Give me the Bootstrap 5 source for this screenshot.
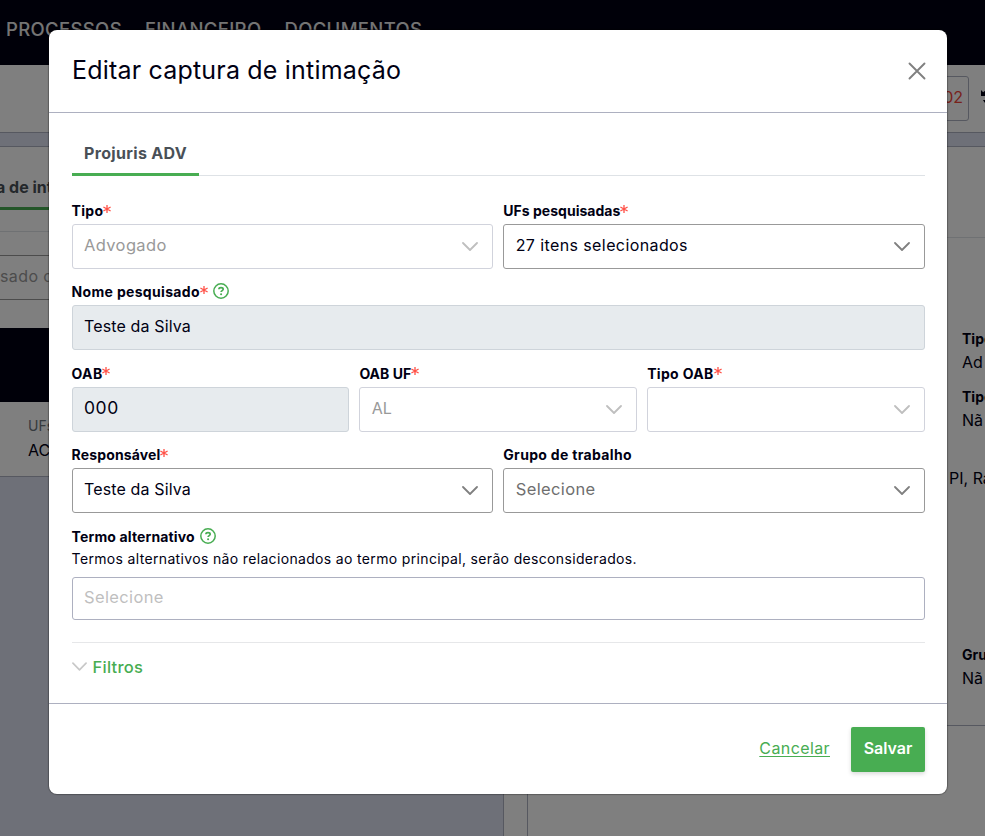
<!DOCTYPE html>
<html lang="pt-BR">
<head>
<meta charset="utf-8">
<meta name="viewport" content="width=device-width, initial-scale=1">
<title>Editar captura de intimação</title>
<link href="https://cdn.jsdelivr.net/npm/bootstrap@5.3.0/dist/css/bootstrap.min.css" rel="stylesheet">
<style>
:root{--ink:#000013;--brand:#48ad52;--line:#adb0c0}
body{font-family:Inter,"Open Sans",sans-serif;font-size:16px;line-height:24px;color:var(--ink);height:836px;overflow:hidden;background:#dce0f0}
.app{height:836px;overflow:hidden}
/* tracking steps */
.k0{letter-spacing:.02px}.k1{letter-spacing:.14px}.k3{letter-spacing:.32px}.k4{letter-spacing:.4px}.k5{letter-spacing:.55px}.k7{letter-spacing:.67px}
.topnav{height:65px;background:var(--ink);color:#e8e8e8;font-size:18.5px;font-weight:500;padding:0 0 7px 6px;gap:23px}
.topnav .k5{letter-spacing:.35px}
.toolbar{height:68px;border-bottom:1px solid var(--line);padding:11px 0 0}
.code-wrap{width:969px}
.code-box{width:200px;height:45px;border:1px solid var(--line);border-radius:3px;color:#f04438;padding:0 5px 3px 0}
.toolbar svg{margin:14px 0 0 12px}
.panes{margin-top:13px;height:690px}
.pane-left{width:503px}
.pane-left>.sheet{height:331px;border-bottom:1px solid var(--line);border-top:1px solid var(--line)}
.bg-tab{height:63px;border-bottom:3px solid var(--brand);padding-top:28px;color:#495057;margin-left:-4px}
.bg-input{height:45px;margin-top:23px;border:solid #999;border-width:1px 0;color:#999;line-height:41px}
.bg-rule{height:22px;border-bottom:1px solid #dee2e6}
.bg-head{height:74px;margin-top:28px;background:var(--ink)}
.bg-row{padding:12px 0 0 28px}
.bg-row .cap{font-size:14px;color:#6c757d}
.gutter{width:24px;border-left:1px solid var(--line)}
.pane-right{min-width:0;border-left:1px solid var(--line);border-top:1px solid var(--line)}
.pr-head{height:91px;border-bottom:1px solid #dee2e6}
.pr-body{height:488px;border-bottom:1px solid var(--line);padding:89px 0 0 434px;line-height:23px}
.pr-body .item{margin-bottom:11px;line-height:24px}
.pr-body .item b{line-height:23px}
.pr-body .states{margin:35px 0 153px -13px}
.pr-body b,.lbl{font-size:14px;font-weight:700}
.shade{inset:0;background:rgba(0,0,0,.5);padding:30px 0 0 49px}
.dialog{width:898px;height:764px;border-radius:8px;box-shadow:0 0 1px 1px rgba(0,0,0,.28)}
.dlg-head{height:83px;border-bottom:1px solid var(--line);padding:0 21px 1px 23px}
.dlg-title{font-size:25px;font-weight:400;line-height:30px;padding-bottom:2px;letter-spacing:.19px}
.dlg-body{height:590px;padding:16px 22px 0 22.6px}
.dlg-foot{height:91px;border-top:1px solid var(--line);padding:0 22px 0 0;gap:21px}
.tabs{height:47px;border-bottom:1px solid #dee2e6;margin-bottom:26px}
.tab-on{height:47px;width:127px;border-bottom:3px solid var(--brand);border-radius:2px 2px 0 0;padding:12px 0 0 12.5px;font-weight:700;color:#495057}
.fields{--bs-gutter-x:10px}
.fields+.fields{margin-top:14.4px}
.lbl{height:22px;line-height:17px;padding-bottom:5px;gap:5px}
.lbl .green{margin-top:-1px}
.req{color:#ff5147;margin:-4px 0 0 -5px}
.box{height:45px;border:1px solid #999;border-radius:3px;padding:0 14px 2px 11.4px}
.box span{padding-bottom:1px}
.box svg{color:#808080;margin-top:2px}
.box.off{border-color:#d1d3dc;color:#999}
.box.off svg{color:#bfbfbf}
.box.ro{background:#e7ebee;border-color:#ced4da}
.box .idle{color:#6f6f6f}
.box .k7{font-size:16.5px;letter-spacing:.37px}
.digits{font-size:17.5px;letter-spacing:.6px}
.hint{font-size:14px;line-height:22px;margin-top:-2px}
.hint.k3{letter-spacing:.34px}
.box.tags{height:43px;margin-top:7px;border-color:var(--line);color:#bfbfbf}
.split{height:23px;border-bottom:1px solid #e6e7e9}
.filters{margin-top:12px;gap:6px;color:var(--brand)}
.filters svg{color:#c8c8c8}
.filters .k7{font-size:16.5px;font-weight:500;letter-spacing:.25px}
.btn-save{width:74px;height:45px;background:var(--brand);color:#fff;border-radius:2px;font-weight:600;box-shadow:0 2px 4px rgba(0,0,0,.15);padding:0 0 3px}
.cancel{color:var(--brand);text-underline-offset:2px;padding-bottom:2px}
.green{color:var(--brand)}
</style>
<script src="https://cdn.jsdelivr.net/npm/bootstrap@5.3.0/dist/js/bootstrap.bundle.min.js"></script>
</head>
<body>
<svg class="d-none">
 <symbol id="chev" viewBox="0 0 16 9"><path d="M1 1l7 7 7-7" fill="none" stroke="currentColor" stroke-width="1.8" stroke-linecap="round" stroke-linejoin="round"/></symbol>
 <symbol id="ask" viewBox="0 0 16 16"><circle cx="8" cy="8" r="7.2" fill="none" stroke="currentColor" stroke-width="1.5"/><path d="M5.900 6.200C6 5 6.900 4.600 8 4.600c1.300 0 2.200.6 2.200 1.600 0 1.400-2.100 1.400-2.100 2.900" fill="none" stroke="currentColor" stroke-width="1.700"/><circle cx="8.100" cy="11.200" r="1.050" fill="currentColor"/></symbol>
 <symbol id="star" viewBox="0 0 8 8"><path d="M4 0v8M.4 2l7.200 4M7.600 2L.4 6" stroke="currentColor" stroke-width="1.300"/></symbol>
</svg>
<div class="app">
 <nav class="topnav d-flex align-items-center"><span class="k5">PROCESSOS</span><span class="k5">FINANCEIRO</span><span class="k5">DOCUMENTOS</span></nav>
 <div class="toolbar bg-white d-flex"><div class="code-wrap d-flex justify-content-end flex-shrink-0"><div class="code-box d-flex align-items-center justify-content-end">02</div></div>
  <svg class="flex-shrink-0" width="18" height="18" viewBox="0 0 18 18"><path d="M0 0l2.200 2.200L4 .8V6H0zM2 10h4v2.500H3.500z" fill="#000013"/></svg></div>
 <div class="panes d-flex">
  <div class="pane-left flex-shrink-0"><div class="sheet bg-white">
   <div class="bg-tab fw-bold">a de int</div>
   <div class="bg-rule"></div>
   <div class="bg-input k4">sado c</div>
   <div class="bg-head"></div>
   <div class="bg-row"><div class="cap">UFs</div><div>AC</div></div>
  </div></div>
  <div class="gutter bg-white flex-shrink-0"></div>
  <div class="pane-right flex-grow-1 bg-white">
   <div class="pr-head"></div>
   <div class="pr-body text-nowrap">
    <div class="item"><b class="d-block">Tipo</b>Ad</div>
    <div class="item"><b class="d-block">Tipo</b>Nã</div>
    <div class="states">PI, Ra</div>
    <div class="item"><b class="d-block">Gru</b>Nã</div>
   </div>
  </div>
 </div>
</div>
<div class="shade position-absolute">
 <div class="dialog bg-white">
  <div class="dlg-head d-flex align-items-center justify-content-between"><h1 class="dlg-title m-0">Editar captura de intimação</h1>
   <svg width="18" height="18" viewBox="0 0 18 18"><path d="M1.500 1.500l15 15M16.500 1.500l-15 15" stroke="#808080" stroke-width="1.900" stroke-linecap="round"/></svg></div>
  <div class="dlg-body">
   <div class="tabs"><div class="tab-on k3">Projuris ADV</div></div>
   <div class="row fields">
    <div class="col-6"><div class="lbl d-flex align-items-center"><span class="k3">Tipo</span><svg class="req" width="8" height="8"><use href="#star"/></svg></div>
     <div class="box off d-flex align-items-center justify-content-between"><span class="k7">Advogado</span><svg width="16" height="9"><use href="#chev"/></svg></div></div>
    <div class="col-6"><div class="lbl d-flex align-items-center"><span class="k0">UFs pesquisadas</span><svg class="req" width="8" height="8"><use href="#star"/></svg></div>
     <div class="box d-flex align-items-center justify-content-between"><span class="k4">27 itens selecionados</span><svg width="16" height="9"><use href="#chev"/></svg></div></div>
   </div>
   <div class="row fields">
    <div class="col-12"><div class="lbl d-flex align-items-center"><span class="k3">Nome pesquisado</span><svg class="req" width="8" height="8"><use href="#star"/></svg><svg class="green" width="16" height="16"><use href="#ask"/></svg></div>
     <div class="box ro d-flex align-items-center"><span class="k1">Teste da Silva</span></div></div>
   </div>
   <div class="row fields">
    <div class="col-4"><div class="lbl d-flex align-items-center"><span class="k3">OAB</span><svg class="req" width="8" height="8"><use href="#star"/></svg></div><div class="box ro d-flex align-items-center"><span class="digits">000</span></div></div>
    <div class="col-4"><div class="lbl d-flex align-items-center"><span class="k0">OAB UF</span><svg class="req" width="8" height="8"><use href="#star"/></svg></div><div class="box off d-flex align-items-center justify-content-between"><span>AL</span><svg width="16" height="9"><use href="#chev"/></svg></div></div>
    <div class="col-4"><div class="lbl d-flex align-items-center"><span class="k3">Tipo OAB</span><svg class="req" width="8" height="8"><use href="#star"/></svg></div><div class="box off d-flex align-items-center justify-content-end"><svg width="16" height="9"><use href="#chev"/></svg></div></div>
   </div>
   <div class="row fields">
    <div class="col-6"><div class="lbl d-flex align-items-center"><span class="k1">Responsável</span><svg class="req" width="8" height="8"><use href="#star"/></svg></div><div class="box d-flex align-items-center justify-content-between"><span class="k1">Teste da Silva</span><svg width="16" height="9"><use href="#chev"/></svg></div></div>
    <div class="col-6"><div class="lbl d-flex align-items-center"><span class="k3">Grupo de trabalho</span></div><div class="box d-flex align-items-center justify-content-between"><span class="idle k7">Selecione</span><svg width="16" height="9"><use href="#chev"/></svg></div></div>
   </div>
   <div class="row fields"><div class="col-12">
    <div class="lbl d-flex align-items-center"><span class="k1">Termo alternativo</span><svg class="green" width="16" height="16"><use href="#ask"/></svg></div>
    <div class="hint k3">Termos alternativos não relacionados ao termo principal, serão desconsiderados.</div>
    <div class="box tags d-flex align-items-center"><span class="k7">Selecione</span></div></div></div>
   <div class="split"></div>
   <div class="filters d-flex align-items-center"><svg width="15" height="9"><use href="#chev"/></svg><span class="k7">Filtros</span></div>
  </div>
  <div class="dlg-foot d-flex align-items-center justify-content-end"><a class="cancel k4" href="#">Cancelar</a><button class="btn btn-save">Salvar</button></div>
 </div>
</div>
</body>
</html>
